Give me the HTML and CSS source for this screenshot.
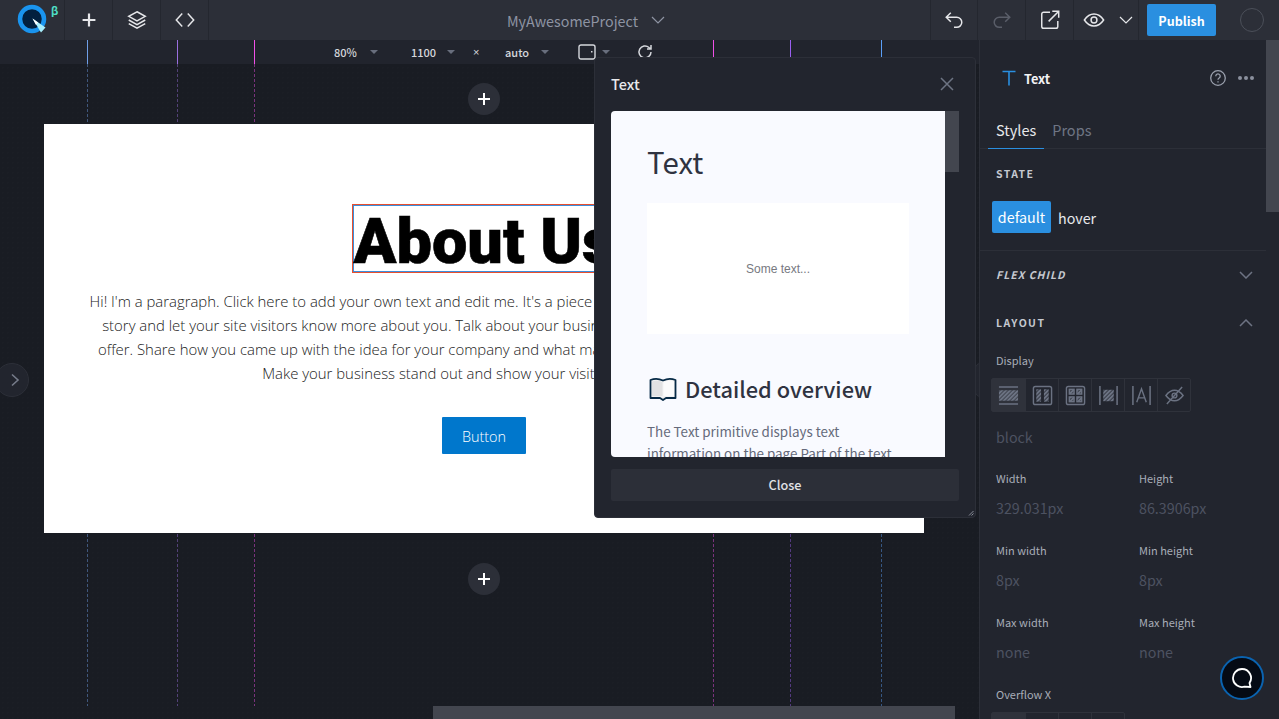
FILE: index.html
```html
<!DOCTYPE html>
<html lang="en">
<head>
    <meta charset="UTF-8">
    <meta name="viewport" content="width=device-width, initial-scale=1.0">
    <title>MyAwesomeProject</title>
    <link rel="stylesheet" href="styles.css">
</head>
<body>
    <!-- Top bar -->
    <header class="topbar">
        <div class="logo-cell">
            <svg class="logo" width="34" height="34" viewBox="0 0 34 34">
                <circle cx="16" cy="16" r="12" fill="#02203f" stroke="#1a94ee" stroke-width="4.5"/>
                <path d="M16.5 15.5 L29.5 24.5 L25 29.5 Z" fill="#a8f0ff"/>
                <path d="M16.5 15.5 L22 19.5 L20 22 Z" fill="#fff"/>
            </svg>
            <span class="beta">β</span>
        </div>
        <div class="tool-cell">
            <svg class="icon" viewBox="0 0 24 24"><path d="M12 5v14M5 12h14" stroke-width="2.4"/></svg>
        </div>
        <div class="tool-cell">
            <svg class="icon" viewBox="0 0 24 24"><path d="M12 3l9 5-9 5-9-5zM3 12l9 5 9-5M3 16l9 5 9-5"/></svg>
        </div>
        <div class="tool-cell tool-last">
            <svg class="icon" viewBox="0 0 24 24"><path d="M9 5l-6.500 7L9 19M15 5l6.500 7L15 19"/></svg>
        </div>
        <div class="project">
            <span>MyAwesomeProject</span>
            <svg class="icon project-caret" viewBox="0 0 24 24"><path d="M4 8l8 8 8-8"/></svg>
        </div>
        <div class="tool-cell tool-first">
            <svg class="icon" viewBox="0 0 24 24"><path d="M8.500 4L3.500 9l5 5M3.500 9H15a5.500 5.500 0 0 1 0 11h-3"/></svg>
        </div>
        <div class="tool-cell">
            <svg class="icon icon-off" viewBox="0 0 24 24"><path d="M15.500 4l5 5-5 5M20.500 9H9a5.500 5.500 0 0 0 0 11h3"/></svg>
        </div>
        <div class="tool-cell">
            <svg class="icon" viewBox="0 0 24 24"><path d="M12 3.500H5a2 2 0 0 0-2 2V19a2 2 0 0 0 2 2h13.500a2 2 0 0 0 2-2v-6M10.500 13.500L21 3M14.500 2.500H21.500V9.500"/></svg>
        </div>
        <div class="preview-cell">
            <svg class="icon" viewBox="0 0 24 24"><path d="M1.500 12C4.500 7.500 8 5.500 12 5.500s7.500 2 10.500 6.500c-3 4.500-6.500 6.500-10.500 6.500S4.500 16.500 1.500 12z"/><circle cx="12" cy="12" r="3.200"/></svg>
            <svg class="icon icon-small" viewBox="0 0 24 24"><path d="M4 8l8 8 8-8"/></svg>
        </div>
        <button class="publish">Publish</button>
        <span class="avatar"></span>
    </header>

    <div class="workspace">
        <main class="canvas">
            <!-- Breakpoint guides -->
            <i class="guide guide-a"></i>
            <i class="guide guide-b"></i>
            <i class="guide guide-c"></i>
            <i class="guide guide-d"></i>
            <i class="guide guide-e"></i>
            <i class="guide guide-f"></i>

            <div class="ruler">
                <span class="ruler-item item-zoom">80%<b class="caret"></b></span>
                <span class="ruler-item item-width">1100<b class="caret"></b></span>
                <span class="times">×</span>
                <span class="ruler-item item-height">auto<b class="caret"></b></span>
                <svg class="device" width="18" height="16" viewBox="0 0 18 16"><rect x="1" y="1" width="16" height="14" rx="2" fill="none" stroke="#d5d7dc" stroke-width="1.400"/><rect x="13" y="7" width="1.500" height="1.500" fill="#d5d7dc"/></svg>
                <b class="caret caret-device"></b>
                <svg class="reload" width="18" height="18" viewBox="0 0 18 18" fill="none" stroke="#d5d7dc" stroke-width="1.500"><path d="M15 9a6 6 0 1 1-2-4.500L15 6M15 2v4h-4"/></svg>
            </div>

            <div class="stage">
                <button class="add-btn add-top">
                    <svg width="14" height="14" viewBox="0 0 14 14"><path d="M7 1v12M1 7h12" stroke="#fff" stroke-width="2"/></svg>
                </button>
                <section class="page">
                    <h1 class="page-title">About Us</h1>
                    <p class="page-text">Hi! I'm a paragraph. Click here to add your own text and edit me. It's a piece of cake. I'm a great place for you to tell the<br>story and let your site visitors know more about you. Talk about your business and what products and services you<br>offer. Share how you came up with the idea for your company and what makes you different from your competitors.<br>Make your business stand out and show your visitors who you are.</p>
                    <a class="page-button">Button</a>
                </section>
                <button class="add-btn add-bottom">
                    <svg width="14" height="14" viewBox="0 0 14 14"><path d="M7 1v12M1 7h12" stroke="#fff" stroke-width="2"/></svg>
                </button>
            </div>

            <div class="side-tab">
                <svg width="12" height="14" viewBox="0 0 12 14" fill="none" stroke="#767c8a" stroke-width="1.600"><path d="M3 1.500L9 7l-6 5.500"/></svg>
            </div>
            <div class="side-tab-right"></div>
            <div class="h-scroll"></div>
        </main>

        <!-- Settings panel -->
        <aside class="panel">
            <div class="panel-scroll"><div class="panel-thumb"></div></div>
            <div class="panel-head">
                <svg class="text-icon" width="16" height="16" viewBox="0 0 16 16" fill="none" stroke="#2a8fe0" stroke-width="1.600"><path d="M1.500 1.500h13M8 1.500V15.500"/></svg>
                <span class="panel-name">Text</span>
                <svg class="help" width="18" height="18" viewBox="0 0 18 18" fill="none" stroke="#9aa0ad" stroke-width="1.300"><circle cx="9" cy="9" r="7.300"/><path d="M6.800 7.200a2.200 2.200 0 1 1 3.400 1.800c-.8.500-1.200 1-1.200 1.800M9 12.200v1.200"/></svg>
                <span class="dots"><i></i><i></i><i></i></span>
            </div>
            <div class="tabs">
                <span class="tab tab-active">Styles</span>
                <span class="tab">Props</span>
            </div>
            <div class="section section-state">
                <h3 class="section-title">STATE</h3>
                <div class="states">
                    <span class="state state-active">default</span>
                    <span class="state">hover</span>
                </div>
            </div>
            <div class="section-row row-flex">
                <h3 class="section-title title-italic">FLEX CHILD</h3>
                <svg class="row-chevron" width="14" height="8" viewBox="0 0 14 8"><path d="M1 1l6 6 6-6"/></svg>
            </div>
            <div class="section-row row-layout">
                <h3 class="section-title">LAYOUT</h3>
                <svg class="row-chevron" width="14" height="8" viewBox="0 0 14 8"><path d="M1 7l6-6 6 6"/></svg>
            </div>

            <label class="field-label label-display">Display</label>
            <div class="icon-group">
                <span class="icon-btn icon-btn-active">
                    <svg viewBox="0 0 22 22">
                        <defs><pattern id="hatch" width="3" height="3" patternUnits="userSpaceOnUse" patternTransform="rotate(45)"><rect width="1.500" height="3" fill="#6b7282"/></pattern></defs>
                        <path d="M1 2h20M1 20h20" stroke-width="1.600"/><rect x="1" y="5.500" width="20" height="11" fill="url(#hatch)" stroke="none"/>
                    </svg>
                </span>
                <span class="icon-btn">
                    <svg viewBox="0 0 22 22"><rect x="1.500" y="1.500" width="19" height="19" rx="2"/><rect x="4.500" y="4.500" width="5" height="13" fill="url(#hatch)" stroke="none"/><rect x="12.500" y="4.500" width="5" height="13" fill="url(#hatch)" stroke="none"/></svg>
                </span>
                <span class="icon-btn">
                    <svg viewBox="0 0 22 22"><rect x="1.500" y="1.500" width="19" height="19" rx="2"/><rect x="4.500" y="4.500" width="5" height="5" fill="url(#hatch)"/><rect x="12.500" y="4.500" width="5" height="5" fill="url(#hatch)"/><rect x="4.500" y="12.500" width="5" height="5" fill="url(#hatch)"/><rect x="12.500" y="12.500" width="5" height="5" fill="url(#hatch)"/></svg>
                </span>
                <span class="icon-btn">
                    <svg viewBox="0 0 22 22"><path d="M2 1v20M20 1v20" stroke-width="1.600"/><rect x="5.500" y="5" width="11" height="12" fill="url(#hatch)" stroke="none"/></svg>
                </span>
                <span class="icon-btn">
                    <svg viewBox="0 0 22 22"><path d="M2 1v20M20 1v20" stroke-width="1.600"/><path d="M6 18L11 4l5 14M7.500 13.500h7"/></svg>
                </span>
                <span class="icon-btn">
                    <svg viewBox="0 0 22 22"><path d="M2 11c3-4 6-5.500 9-5.500s6 1.500 9 5.500c-3 4-6 5.500-9 5.500S5 15 2 11zM3 20L19 2"/><circle cx="11" cy="11" r="2.500"/></svg>
                </span>
            </div>
            <div class="field-value value-display">block</div>

            <div class="field-grid">
                <div class="field"><label class="field-label">Width</label><div class="field-value">329.031px</div></div>
                <div class="field"><label class="field-label">Height</label><div class="field-value">86.3906px</div></div>
                <div class="field"><label class="field-label">Min width</label><div class="field-value">8px</div></div>
                <div class="field"><label class="field-label">Min height</label><div class="field-value">8px</div></div>
                <div class="field"><label class="field-label">Max width</label><div class="field-value">none</div></div>
                <div class="field"><label class="field-label">Max height</label><div class="field-value">none</div></div>
            </div>

            <label class="field-label label-overflow">Overflow X</label>
            <div class="icon-group">
                <span class="icon-btn icon-btn-active"></span>
                <span class="icon-btn"></span>
                <span class="icon-btn"></span>
                <span class="icon-btn"></span>
            </div>
        </aside>
    </div>

    <!-- Info dialog -->
    <div class="modal">
        <div class="modal-head">
            <span class="modal-title">Text</span>
            <svg width="14" height="14" viewBox="0 0 14 14" fill="none" stroke="#6d7483" stroke-width="1.500"><path d="M1 1l12 12M13 1L1 13"/></svg>
        </div>
        <div class="modal-body">
            <div class="doc">
                <h1 class="doc-title">Text</h1>
                <div class="doc-preview">Some text...</div>
                <h2 class="doc-heading">
                    <svg class="doc-book" width="28" height="24" viewBox="0 0 28 24">
                        <path d="M1.500 3C5 1.500 10 1.500 14 3.500 18 1.500 23 1.500 26.500 3V21H17L14 23 11 21H1.500z" fill="#f2f2f2" stroke="#072a46" stroke-width="1.800" stroke-linejoin="round"/>
                        <path d="M3 4.500C6 3.500 10 3.500 13.500 5V19H3z" fill="#e2e2e3"/>
                        <path d="M25 4.500C22 3.500 18 3.500 14.500 5V19H25z" fill="#fbfbfb"/>
                    </svg>
                    Detailed overview
                </h2>
                <p class="doc-text">The Text primitive displays text information on the page Part of the text content can be styled separately</p>
            </div>
            <div class="doc-scroll"><div class="doc-thumb"></div></div>
        </div>
        <button class="modal-close">Close</button>
        <svg class="resize" width="6" height="6" viewBox="0 0 6 6" fill="none" stroke="#8a8f9a"><path d="M5.500 1L1 5.500M5.500 3.500L3.500 5.500"/></svg>
    </div>

    <!-- Chat button -->
    <div class="chat">
        <svg width="22" height="22" viewBox="0 0 22 22" fill="none" stroke="#fff" stroke-width="1.800" stroke-linejoin="round"><path d="M11 2a9 9 0 1 0 2.500 17.650L19.500 20l-1-4A9 9 0 0 0 11 2z"/></svg>
    </div>
</body>
</html>
```

FILE: styles.css
```css
* {
    box-sizing: border-box;
}
html, body {
    height: 100%;
}
body {
    margin: 0;
    display: flex;
    flex-direction: column;
    position: relative;
    overflow: hidden;
    background-color: #191c23;
    color: #fff;
    font-family: "Noto Sans CJK SC", "Noto Sans", sans-serif;
}
button {
    font-family: inherit;
    border: none;
    padding: 0;
}
h1, h2, h3, p {
    margin: 0;
}

/* Top bar */
.topbar {
    flex: none;
    display: flex;
    align-items: stretch;
    height: 40px;
    padding-right: 15px;
    background-color: #2c2f38;
}
.logo-cell {
    position: relative;
    width: 65px;
    padding: 3px 0 0 16px;
    border-right: 1px solid #24272f;
}
.logo {
    display: block;
}
.beta {
    position: absolute;
    left: 51px;
    top: 2px;
    font-size: 11px;
    font-weight: 700;
    color: #4fe0c8;
}
.tool-cell {
    width: 48px;
    display: flex;
    align-items: center;
    justify-content: center;
    border-right: 1px solid #24272f;
}
.tool-first {
    border-left: 1px solid #24272f;
}
.icon {
    width: 22px;
    height: 22px;
    fill: none;
    stroke: #e6e7ea;
    stroke-width: 1.600;
}
.icon-off {
    stroke: #5a5e69;
}
.icon-small {
    width: 18px;
    height: 18px;
}
.project {
    flex: 1;
    display: flex;
    align-items: center;
    gap: 11px;
    padding-left: 298px;
    font-size: 14.300px;
    color: #8e94a3;
}
.project-caret {
    width: 18px;
    height: 18px;
    stroke: #8e94a3;
}
.preview-cell {
    width: 65px;
    display: flex;
    align-items: center;
    padding-left: 9px;
    gap: 12px;
    border-right: 1px solid #24272f;
}
.publish {
    width: 69px;
    height: 32px;
    margin: 4px 0 0 8px;
    background-color: #2a8fe0;
    color: #fff;
    font-size: 12.500px;
    font-weight: 700;
    border-radius: 2px;
}
.avatar {
    width: 24px;
    height: 24px;
    margin: 8px 0 0 24px;
    border: 1px solid #4b4f59;
    border-radius: 50%;
}

/* Canvas */
.workspace {
    flex: 1;
    display: flex;
    min-height: 0;
}
.canvas {
    position: relative;
    flex: 1;
    min-width: 0;
    display: flex;
    flex-direction: column;
    background-color: #191c23;
    background-image: radial-gradient(#1b1e25 1px, transparent 1px);
    background-size: 5px 5px;
}
.ruler {
    flex: none;
    display: flex;
    align-items: center;
    height: 24px;
    padding-left: 334px;
    background-color: #21242d;
    font-size: 11px;
    font-weight: 500;
    line-height: 22px;
    color: #d5d7dc;
}
.ruler-item {
    display: flex;
    align-items: center;
}
.caret {
    display: block;
    width: 0;
    height: 0;
    border-left: 4px solid transparent;
    border-right: 4px solid transparent;
    border-top: 4px solid #686e7d;
}
.item-zoom {
    width: 77px;
    gap: 13px;
}
.item-width {
    width: 62px;
    gap: 11px;
}
.times {
    width: 32px;
    font-family: "Liberation Sans", sans-serif;
    font-size: 11px;
}
.item-height {
    width: 73px;
    gap: 12px;
}
.caret-device {
    margin: 0 0 0 6px;
}
.reload {
    margin-left: 26px;
}
.guide {
    position: absolute;
    top: 0;
    bottom: 13px;
    width: 1px;
}
.guide::before {
    content: "";
    position: absolute;
    top: 0;
    left: 0;
    width: 1px;
    height: 24px;
    background-color: var(--c);
}
.guide::after {
    content: "";
    position: absolute;
    top: 24px;
    bottom: 0;
    left: 0;
    width: 1px;
    background-image: linear-gradient(var(--c) 60%, transparent 60%);
    background-size: 1px 5px;
    opacity: 0.45;
}
.guide-a {
    left: 87px;
    --c: #6f9fe8;
}
.guide-b {
    left: 177px;
    --c: #9a6fe0;
}
.guide-c {
    left: 254px;
    --c: #f050e8;
}
.guide-d {
    left: 713px;
    --c: #f050e8;
}
.guide-e {
    left: 790px;
    --c: #9a5ff0;
}
.guide-f {
    left: 881px;
    --c: #5a9ff8;
}
.stage {
    position: relative;
    z-index: 1;
    display: flex;
    flex-direction: column;
    align-items: center;
    width: 880px;
    margin-left: 44px;
}
.add-btn {
    display: flex;
    align-items: center;
    justify-content: center;
    width: 32px;
    height: 32px;
    background-color: #2c2f38;
    border-radius: 50%;
}
.add-top {
    margin: 19px 0 9px;
}
.add-bottom {
    margin-top: 30px;
}
.page {
    width: 880px;
    height: 409px;
    display: flex;
    flex-direction: column;
    align-items: center;
    padding-top: 80px;
    background-color: #fff;
    color: #000;
    font-family: "Open Sans", sans-serif;
}
.page-title {
    width: 264px;
    height: 69px;
    outline: 1px solid #e8502f;
    outline-offset: -1px;
    box-shadow: inset 0 0 0 2px #3b8fdc;
    font-family: Roboto, sans-serif;
    font-size: 63px;
    font-weight: 900;
    line-height: 76px;
    text-align: center;
    white-space: nowrap;
    -webkit-text-stroke: 0.6px #000;
}
.page-text {
    margin-top: 16px;
    font-size: 14.900px;
    font-weight: 300;
    line-height: 24px;
    text-align: center;
    white-space: nowrap;
    color: #222;
}
.page-button {
    display: block;
    width: 84px;
    height: 37px;
    margin-top: 32px;
    background-color: #0077cc;
    border-radius: 1px;
    color: #fff;
    font-size: 14.400px;
    font-weight: 300;
    line-height: 39px;
    text-align: center;
}
.side-tab {
    position: absolute;
    left: -5px;
    top: 323px;
    width: 34px;
    height: 34px;
    display: flex;
    align-items: center;
    justify-content: center;
    padding-left: 5px;
    background-color: #22252e;
    border: 1px solid #2c2f38;
    border-radius: 17px;
}
.side-tab-right {
    position: absolute;
    left: 975px;
    top: 323px;
    width: 10px;
    height: 34px;
    background-color: #22252e;
    border: 1px solid #2c2f38;
    border-radius: 5px 0 0 5px;
}
.h-scroll {
    position: absolute;
    left: 433px;
    bottom: 0;
    width: 522px;
    height: 13px;
    background-color: #43464f;
}

/* Settings panel */
.panel {
    position: relative;
    flex: none;
    width: 300px;
    padding-right: 13px;
    overflow: hidden;
    background-color: #22252e;
    border-left: 1px solid #2c2f38;
}
.panel-scroll {
    position: absolute;
    top: 0;
    right: 0;
    bottom: 0;
    width: 13px;
}
.panel-thumb {
    height: 172px;
    background-color: #43464f;
}
.panel-head {
    display: flex;
    align-items: center;
    height: 76px;
    padding: 0 12px 0 21px;
}
.text-icon {
    margin-right: 7px;
}
.panel-name {
    flex: 1;
    font-size: 12.700px;
    font-weight: 700;
    color: #f2f3f5;
}
.help {
    margin-right: 11px;
}
.dots {
    display: flex;
    gap: 2px;
}
.dots i {
    width: 4px;
    height: 4px;
    background-color: #8b909d;
    border-radius: 50%;
}
.tabs {
    display: flex;
    height: 33px;
    padding-left: 8px;
    border-bottom: 1px solid #2c2f38;
}
.tab {
    height: 33px;
    padding: 3px 8px 0;
    font-size: 14.500px;
    color: #6f7584;
}
.tab-active {
    color: #e8e9ec;
    border-bottom: 1px solid #2a8fe0;
}
.section-state {
    height: 102px;
    padding: 17px 16px 0;
    border-bottom: 1px solid #2c2f38;
}
.section-title {
    font-size: 10.500px;
    font-weight: 700;
    line-height: 16px;
    letter-spacing: 1.400px;
    color: #c6c9d0;
}
.title-italic {
    font-style: italic;
    letter-spacing: 1px;
}
.states {
    display: flex;
    align-items: center;
    gap: 7px;
    margin: 19px 0 0 -4px;
    font-size: 14.300px;
    color: #e8e9ec;
}
.state-active {
    height: 32px;
    line-height: 32px;
    width: 59px;
    text-align: center;
    background-color: #2a8fe0;
    border-radius: 2px;
    color: #fff;
}
.section-row {
    display: flex;
    align-items: center;
    justify-content: space-between;
    padding: 0 13px 0 16px;
}
.row-flex {
    margin-top: 16px;
    height: 16px;
}
.row-layout {
    margin-top: 32px;
    height: 16px;
}
.row-chevron {
    fill: none;
    stroke: #6d7383;
    stroke-width: 1.500;
}
.field-label {
    display: block;
    font-size: 11px;
    line-height: 16px;
    color: #a8adb8;
}
.label-display {
    margin: 21px 0 0 16px;
}
.label-overflow {
    margin: 20px 0 0 16px;
}
.icon-group {
    display: inline-flex;
    margin: 10px 0 0 11px;
    border: 1px solid #2f323b;
    border-radius: 2px;
    vertical-align: top;
}
.icon-btn {
    width: 33px;
    height: 32px;
    display: flex;
    align-items: center;
    justify-content: center;
    border-left: 1px solid #2f323b;
}
.icon-btn:first-child {
    border-left: none;
}
.icon-btn-active {
    background-color: #2f323b;
}
.icon-btn svg {
    width: 21px;
    height: 21px;
    fill: none;
    stroke: #6b7282;
    stroke-width: 1.500;
}
.field-value {
    margin-top: 11px;
    font-size: 14.300px;
    line-height: 22px;
    color: #4d5261;
}
.value-display {
    margin: 14px 0 0 16px;
}
.field-grid {
    display: grid;
    grid-template-columns: 143px 1fr;
    row-gap: 20px;
    margin-top: 22px;
    padding-left: 16px;
}
.field {
    height: 52px;
}

/* Info dialog */
.modal {
    position: absolute;
    left: 594px;
    top: 57px;
    z-index: 5;
    width: 382px;
    height: 461px;
    padding: 0 16px;
    background-color: #22252e;
    border: 1px solid #2c2f38;
    border-radius: 4px;
}
.modal-head {
    display: flex;
    align-items: center;
    justify-content: space-between;
    height: 53px;
    padding: 0 5px 2px 0;
}
.modal-title {
    font-size: 14.500px;
    font-weight: 500;
    color: #e8e9ec;
}
.modal-body {
    display: flex;
    height: 346px;
}
.doc {
    width: 334px;
    padding: 32px 36px 0;
    overflow: hidden;
    background-color: #f9faff;
    border-radius: 4px 0 0 4px;
    color: #2f3341;
}
.doc-title {
    font-size: 29.400px;
    font-weight: 400;
    line-height: 36px;
}
.doc-preview {
    width: 262px;
    height: 131px;
    margin-top: 24px;
    background-color: #fff;
    font-family: "Liberation Sans", sans-serif;
    font-size: 12px;
    line-height: 132px;
    text-align: center;
    color: #77797f;
}
.doc-heading {
    display: flex;
    align-items: center;
    gap: 8px;
    margin-top: 38px;
    font-size: 21.800px;
    font-weight: 500;
    line-height: 34px;
    white-space: nowrap;
}
.doc-book {
    margin-left: 2px;
}
.doc-text {
    margin-top: 15px;
    font-size: 13.400px;
    line-height: 21.500px;
    color: #656a7b;
}
.doc-scroll {
    width: 14px;
}
.doc-thumb {
    height: 61px;
    background-color: #43464f;
}
.modal-close {
    display: block;
    width: 100%;
    height: 32px;
    margin-top: 12px;
    padding-bottom: 2px;
    background-color: #2c2f38;
    color: #e0e1e5;
    font-size: 12.700px;
    font-weight: 500;
    border-radius: 2px;
}
.resize {
    position: absolute;
    right: 1px;
    bottom: 1px;
}

/* Chat button */
.chat {
    position: absolute;
    left: 1220px;
    top: 656px;
    z-index: 6;
    width: 44px;
    height: 44px;
    display: flex;
    align-items: center;
    justify-content: center;
    background-color: #050a14;
    border: 2px solid #0a63b0;
    border-radius: 50%;
}
```
